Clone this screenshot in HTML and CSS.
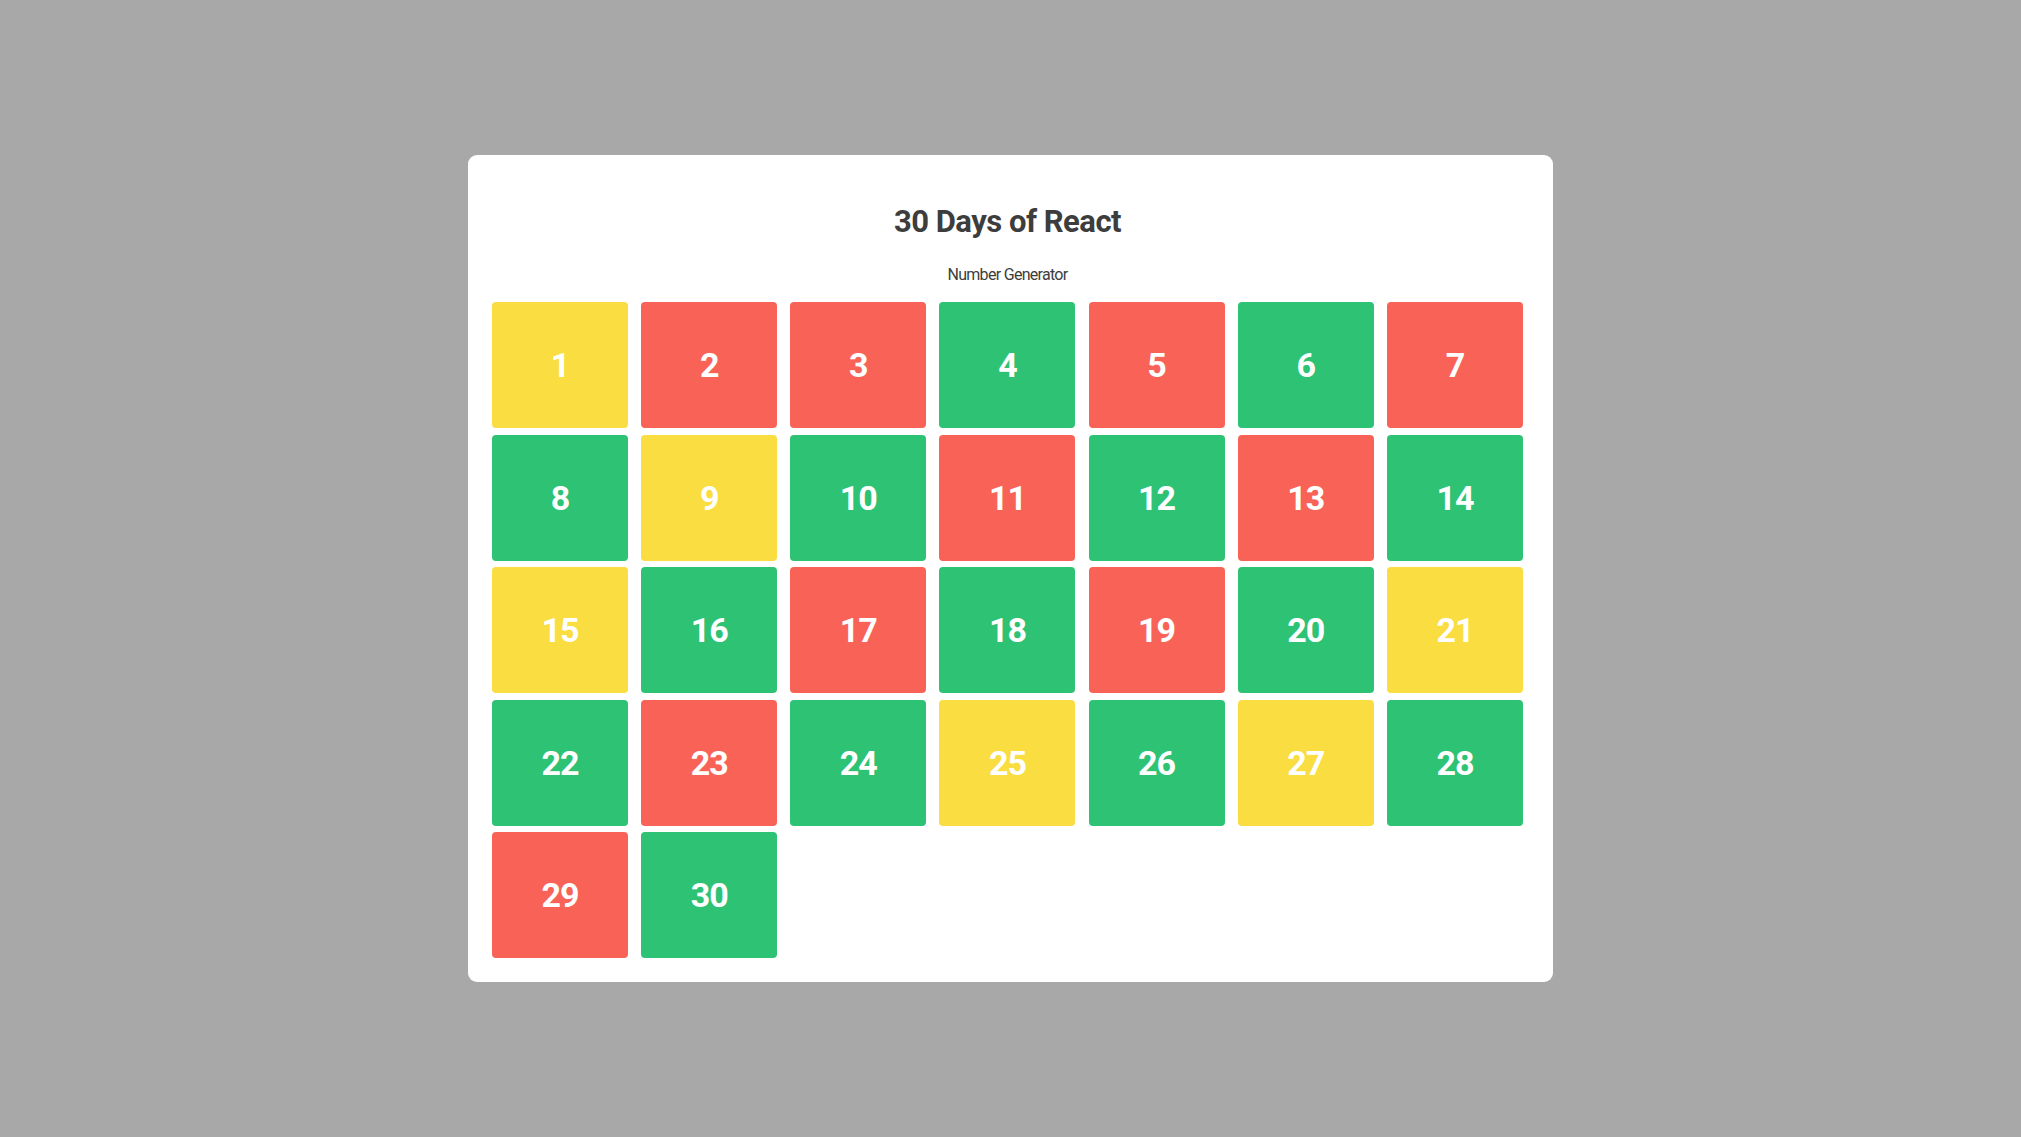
FILE: index.html
```html
<!DOCTYPE html>
<html>
<head>
<meta charset="utf-8">
<link rel="stylesheet" href="styles.css">
</head>
<body>
<div class="page">
  <div class="card">
    <h1 class="title">30 Days of React</h1>
    <p class="subtitle">Number Generator</p>
    <div class="grid">
      <div class="tile yellow">1</div>
      <div class="tile red">2</div>
      <div class="tile red">3</div>
      <div class="tile green">4</div>
      <div class="tile red">5</div>
      <div class="tile green">6</div>
      <div class="tile red">7</div>
      <div class="tile green">8</div>
      <div class="tile yellow">9</div>
      <div class="tile green">10</div>
      <div class="tile red">11</div>
      <div class="tile green">12</div>
      <div class="tile red">13</div>
      <div class="tile green">14</div>
      <div class="tile yellow">15</div>
      <div class="tile green">16</div>
      <div class="tile red">17</div>
      <div class="tile green">18</div>
      <div class="tile red">19</div>
      <div class="tile green">20</div>
      <div class="tile yellow">21</div>
      <div class="tile green">22</div>
      <div class="tile red">23</div>
      <div class="tile green">24</div>
      <div class="tile yellow">25</div>
      <div class="tile green">26</div>
      <div class="tile yellow">27</div>
      <div class="tile green">28</div>
      <div class="tile red">29</div>
      <div class="tile green">30</div>
    </div>
  </div>
</div>
</body>
</html>
```

FILE: styles.css
```css
html, body {
  margin: 0;
  padding: 0;
  background: #a8a8a8;
}
body {
  font-family: Roboto, "Liberation Sans", sans-serif;
  width: 2021px;
  height: 1137px;
  overflow: hidden;
}
.page {
  padding-top: 155px;
  padding-left: 468px;
}
.card {
  width: 1085px;
  height: 827px;
  box-sizing: border-box;
  background: #fff;
  border-radius: 9px;
  padding: 51px 30px 24px 24px;
  display: flex;
  flex-direction: column;
  align-items: center;
}
.title {
  margin: 0;
  font-size: 31px;
  line-height: 31px;
  font-weight: 700;
  color: #3d3d3d;
  letter-spacing: -0.5px;
}
.subtitle {
  margin: 28.5px 0 0 0;
  font-size: 16px;
  line-height: 18px;
  color: #3d3d3d;
  letter-spacing: -0.7px;
}
.grid {
  margin-top: 18.5px;
  display: grid;
  grid-template-columns: repeat(7, 136px);
  grid-auto-rows: 126px;
  column-gap: 13.17px;
  row-gap: 6.5px;
  align-self: flex-start;
}
.tile {
  border-radius: 4px;
  display: flex;
  align-items: center;
  justify-content: center;
  color: #fff;
  font-weight: 700;
  font-size: 34px;
  letter-spacing: -1px;
  box-sizing: border-box;
}
.yellow { background: #fadd40; }
.red { background: #f96357; }
.green { background: #2ec275; }
```
